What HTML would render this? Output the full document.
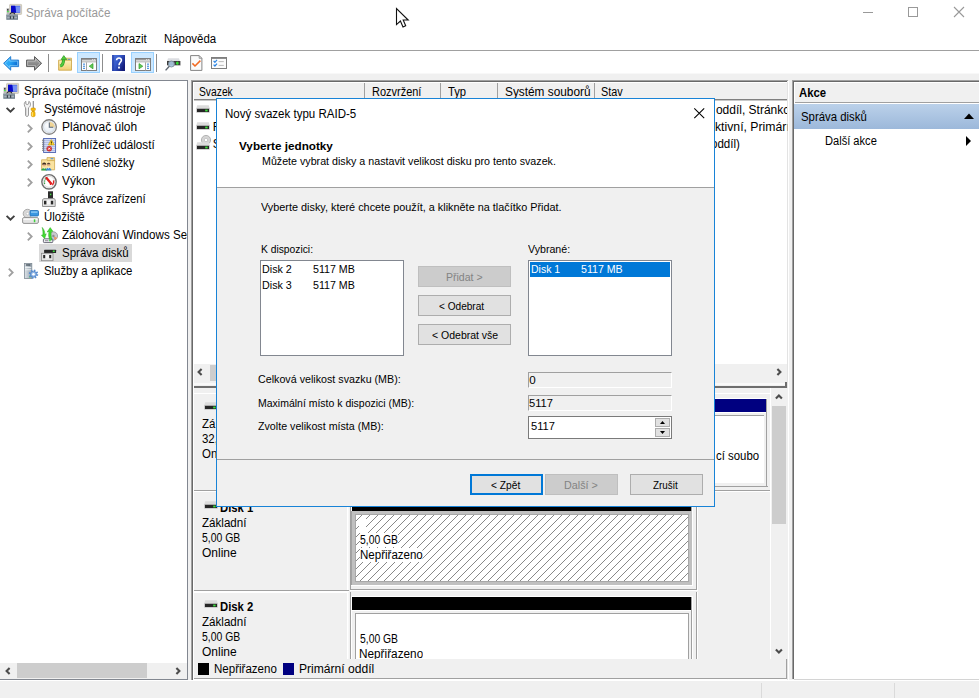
<!DOCTYPE html>
<html lang="cs">
<head>
<meta charset="utf-8">
<title>Správa počítače</title>
<style>
*{box-sizing:border-box;margin:0;padding:0}
html,body{width:979px;height:698px;overflow:hidden;background:#fff}
body{font-family:"Liberation Sans",sans-serif;font-size:12px;color:#000;position:relative}
.abs{position:absolute}
.t{position:absolute;white-space:nowrap;line-height:14px;height:14px;transform-origin:0 0}
/* title bar */
#titlebar{left:0;top:0;width:979px;height:27px;background:#fff}
#title{left:27px;top:6px;color:#999;font-size:12px}
/* menu */
#menubar{left:0;top:27px;width:979px;height:23px;background:#fff}
#menuline{left:0;top:50px;width:979px;height:1px;background:#a0a0a0}
.menu{top:32px;font-size:12px}
/* toolbar */
#toolbar{left:0;top:51px;width:979px;height:22px;background:#fff}
#toolline{left:0;top:73px;width:979px;height:1px;background:#f8f8f8}
#bg{left:0;top:74px;width:979px;height:624px;background:#f0f0f0}
/* tree */
#tree{overflow:hidden;left:0;top:80px;width:188px;height:599px;background:#fff;border-top:1px solid #828790;border-right:1px solid #828790}
.tr{font-size:12px}
/* middle */
#mid{left:191px;top:80px;width:596px;height:600px;background:#fff;border-top:2px solid #696969;border-left:2px solid #696969}
/* right */
#right{left:792px;top:80px;width:187px;height:599px;background:#fff;border-left:2px solid #696969;border-top:2px solid #696969}
/* status */
#status{left:0;top:680px;width:979px;height:18px;background:#f0f0f0}

/* volume list */
#vhead{left:194px;top:83px;width:593px;height:18px;background:#f0f0f0;border-bottom:1px solid #c8c8c8}
.vh{top:85px;font-size:12px}
.vsep{top:83px;width:1px;height:16px;background:#a0a0a0}
.vsep2{top:82px;width:1px;height:17px;background:#fff}
.vrow{font-size:12px}
#hscroll{left:194px;top:364px;width:593px;height:18px;background:#f0f0f0}
#hthumb{left:210px;top:365px;width:480px;height:16px;background:#cdcdcd}
#split1{left:194px;top:382px;width:593px;height:6px;background:#f0f0f0}
#lower{left:194px;top:388px;width:577px;height:271px;background:#f0f0f0}
#vscroll{left:771px;top:388px;width:17px;height:271px;background:#f0f0f0}
#vthumb{left:772px;top:406px;width:14px;height:118px;background:#cdcdcd}
#legend{left:194px;top:659px;width:593px;height:20px;background:#f0f0f0;border-right:1px solid #a0a0a0;border-bottom:1px solid #a0a0a0}
.dl{font-size:12px}
.hatch{background:#fff repeating-linear-gradient(135deg,#fff 0,#fff 3.95px,#8a8a8a 3.95px,#8a8a8a 4.95px,#fff 4.95px,#fff 5.66px)}
/* actions */
#ahead{left:795px;top:83px;width:184px;height:20px;background:#f0f0f0;border-bottom:1px solid #a0a0a0}
#asel{left:794px;top:104px;width:185px;height:25px;background:linear-gradient(#bbd1ea,#9cb8da)}

/* dialog */
#dlg{left:216px;top:98px;width:499px;height:409px;background:#f0f0f0;border:1px solid #1883d7}
#dlghead{left:217px;top:99px;width:497px;height:88px;background:#fff}
.d{font-size:11.6px}
.btn{position:absolute;height:21px;background:#e1e1e1;border:1px solid #adadad;font-size:11px;text-align:center;line-height:19px;white-space:nowrap}
.btn.dis{background:#cccccc;border-color:#bfbfbf;color:#838383}
.lb{position:absolute;background:#fff;border:1px solid #828790}
.sunk{position:absolute;height:16px;background:#f0f0f0;border-top:1px solid #a0a0a0;border-left:1px solid #a0a0a0;border-bottom:1px solid #fff;border-right:1px solid #fff}

.tbsel{position:absolute;top:52px;width:23px;height:21px;background:#cce8ff;border:1px solid #99d1ff}
.tbsep{position:absolute;top:54px;width:1px;height:18px;background:#8d8d8d}
svg{position:absolute;overflow:visible}
</style>
</head>
<body>
<div class="abs" id="titlebar"></div>
<div class="t" id="title" style="transform:scaleX(0.9731);left:26.0px">Správa počítače</div>

<!-- TITLE ICON / CONTROLS / CURSOR -->
<svg style="left:6px;top:4px" width="16" height="16" viewBox="0 0 16 16"><rect x="3.6" y="0.4" width="12" height="10" rx="0.6" fill="#dcd8c8" stroke="#b8b4a4" stroke-width="0.6"/><rect x="5" y="1.8" width="9.2" height="7" fill="#3a5ae8"/><path d="M5 1.8 H9 L10.2 8.8 H5 Z" fill="#0808c8"/><rect x="10" y="2.4" width="4" height="6" fill="#8fa8f8" opacity="0.7"/><rect x="0.6" y="4.2" width="2.6" height="6" fill="#b8b8b8"/><rect x="1.2" y="5" width="1.2" height="1.6" fill="#2a2a2a"/><rect x="1" y="7" width="1.8" height="1.2" fill="#4be34b"/><path d="M3.6 10.6 C4.4 8.2 8.4 8.2 9 10.6" fill="none" stroke="#222" stroke-width="1.1"/><rect x="0.3" y="10.6" width="11.7" height="5.2" fill="#71808c"/><rect x="0.3" y="10.6" width="11.7" height="1.2" fill="#8d9aa4"/><rect x="1.2" y="12.6" width="9.8" height="1.8" fill="#a8b2ba"/><rect x="3.8" y="12.2" width="1.2" height="2.6" fill="#39434b"/><rect x="7" y="12.2" width="1.2" height="2.6" fill="#39434b"/></svg>
<div class="abs" style="left:863px;top:12px;width:10px;height:1px;background:#999"></div>
<div class="abs" style="left:908px;top:7px;width:10px;height:10px;border:1px solid #999"></div>
<svg style="left:954px;top:7px" width="10" height="10" viewBox="0 0 10 10"><path d="M0 0 L10 10 M10 0 L0 10" stroke="#999" stroke-width="1.1" fill="none"/></svg>
<div class="abs" id="menubar"></div>
<div id="x0" class="t menu" style="transform:scaleX(0.9587);left:8.75px">Soubor</div>
<div id="x1" class="t menu" style="transform:scaleX(0.9591);left:62.25px">Akce</div>
<div id="x2" class="t menu" style="transform:scaleX(0.9611);left:104.5px">Zobrazit</div>
<div id="x3" class="t menu" style="transform:scaleX(0.9521);left:163.75px">Nápověda</div>
<div class="abs" id="menuline"></div>
<div class="abs" id="toolbar"></div>
<div class="abs" id="toolline"></div>
<div class="abs" id="bg"></div>


<!-- TOOLBAR ICONS -->
<svg style="left:3px;top:56px" width="16" height="15" viewBox="0 0 16 15"><defs><linearGradient id="gb" x1="0" y1="0.2" x2="1" y2="0.6"><stop offset="0" stop-color="#39b4fa"/><stop offset="0.45" stop-color="#27a6f6"/><stop offset="1" stop-color="#0560cc"/></linearGradient></defs><path d="M7.7 0.6 L0.6 7.3 L7.7 14.2 L7.7 10.6 L15.6 10.6 L15.6 4.1 L7.7 4.1 Z" fill="url(#gb)" stroke="#2a80d2" stroke-width="1"/><path d="M6.7 2.9 L2.1 7.3 L6.7 11.8 L6.7 9.6 L14.6 9.6 L14.6 5.1 L6.7 5.1 Z" fill="none" stroke="#8fd6ff" stroke-opacity="0.75" stroke-width="0.9"/></svg>
<svg style="left:26px;top:56px" width="16" height="15" viewBox="0 0 16 15"><defs><linearGradient id="gg" x1="0" y1="0" x2="0" y2="1"><stop offset="0" stop-color="#b5b5b5"/><stop offset="0.5" stop-color="#8c8c8c"/><stop offset="1" stop-color="#6e6e6e"/></linearGradient></defs><path d="M8.5 0.6 L15.6 7.3 L8.5 14.2 L8.5 10.6 L0.6 10.6 L0.6 4.1 L8.5 4.1 Z" fill="url(#gg)" stroke="#5a5a5a" stroke-width="1"/><path d="M9.5 2.9 L14.1 7.3 L9.5 11.8 L9.5 9.6 L1.6 9.6 L1.6 5.1 L9.5 5.1 Z" fill="none" stroke="#c4c4c4" stroke-opacity="0.8" stroke-width="0.9"/></svg>
<div class="tbsep" style="left:48px"></div>
<svg style="left:58px;top:55px" width="15" height="16" viewBox="0 0 15 16"><defs><linearGradient id="gf" x1="0" y1="0" x2="0" y2="1"><stop offset="0" stop-color="#fdf0bc"/><stop offset="1" stop-color="#f0cf72"/></linearGradient></defs><path d="M7.5 3.2 L13.5 3.2 L13.5 6 L7.5 6 Z" fill="#f3dc94" stroke="#cfa94e" stroke-width="0.8"/><rect x="9.8" y="3.9" width="2.6" height="1.1" fill="#4a90e0"/><path d="M0.6 5.2 L13.5 5.2 L13.5 15.2 L0.6 15.2 Z" fill="url(#gf)" stroke="#cfa94e" stroke-width="0.9"/><path d="M2.2 11.2 C4.6 10.2 5.6 7.6 5.6 4.2" fill="none" stroke="#2f9a24" stroke-width="3"/><path d="M2.2 11.2 C4.6 10.2 5.6 7.6 5.6 4.2" fill="none" stroke="#52cc3e" stroke-width="1.8"/><path d="M3 4.6 L5.8 0.6 L8.8 4.6 Z" fill="#52cc3e" stroke="#2f9a24" stroke-width="0.7"/></svg>
<div class="tbsel" style="left:77px"></div>
<svg style="left:81px;top:58px" width="16" height="13" viewBox="0 0 16 13"><rect x="0.5" y="0.5" width="15" height="12" fill="#fdfdfd" stroke="#7e7e7e"/><rect x="1" y="1" width="14" height="1.4" fill="#9a9a9a"/><rect x="11.2" y="1" width="1" height="1.2" fill="#e8e8e8"/><rect x="13.2" y="1" width="1" height="1.2" fill="#e8e8e8"/><rect x="1" y="3.4" width="14" height="0.9" fill="#a4a4a4"/><rect x="5.0" y="4.3" width="1" height="8.2" fill="#a4a4a4"/><rect x="2" y="5.6" width="2" height="1.1" fill="#3c8ae0"/><rect x="2" y="7.7" width="2" height="1.1" fill="#3c8ae0"/><rect x="2" y="9.8" width="2" height="1.1" fill="#3c8ae0"/><path d="M12 5.6 L8.2 8.2 L12 10.8 Z" fill="#62c956" stroke="#2f9e2a" stroke-width="0.7"/></svg>
<div class="tbsep" style="left:102px"></div>
<svg style="left:112px;top:55px" width="13" height="16" viewBox="0 0 13 16"><defs><linearGradient id="gh" x1="0" y1="0" x2="1" y2="0.6"><stop offset="0" stop-color="#5078e0"/><stop offset="0.5" stop-color="#3558c8"/><stop offset="1" stop-color="#141c7a"/></linearGradient></defs><rect x="0" y="0" width="13" height="16" fill="url(#gh)"/><rect x="0" y="0" width="2.2" height="16" fill="#24389c" opacity="0.55"/><path d="M4.6 5.2 C4.4 2.2 9.6 2.2 9.4 5.2 C9.3 7.2 7 7.4 7 10.2" fill="none" stroke="#fff" stroke-width="1.6"/><rect x="6.1" y="11.6" width="1.8" height="1.9" fill="#fff"/></svg>
<div class="tbsel" style="left:131px"></div>
<svg style="left:135px;top:58px" width="16" height="13" viewBox="0 0 16 13"><rect x="0.5" y="0.5" width="15" height="12" fill="#fdfdfd" stroke="#7e7e7e"/><rect x="1" y="1" width="14" height="1.4" fill="#9a9a9a"/><rect x="11.2" y="1" width="1" height="1.2" fill="#e8e8e8"/><rect x="13.2" y="1" width="1" height="1.2" fill="#e8e8e8"/><rect x="1" y="3.4" width="14" height="0.9" fill="#a4a4a4"/><rect x="10.0" y="4.3" width="1" height="8.2" fill="#a4a4a4"/><rect x="12" y="5.6" width="2" height="1.1" fill="#3c8ae0"/><rect x="12" y="7.7" width="2" height="1.1" fill="#3c8ae0"/><rect x="12" y="9.8" width="2" height="1.1" fill="#3c8ae0"/><path d="M4 5.6 L7.8 8.2 L4 10.8 Z" fill="#62c956" stroke="#2f9e2a" stroke-width="0.7"/></svg>
<div class="tbsep" style="left:156px"></div>
<svg style="left:165px;top:58px" width="16" height="13" viewBox="0 0 16 13"><path d="M3 0.2 H14 L15 3.2 H2 Z" fill="#dcdee2"/><rect x="2" y="3" width="13.4" height="4.4" fill="#3c3c3c"/><rect x="2" y="7.2" width="13.4" height="0.7" fill="#c8c8c8"/><rect x="11" y="4.1" width="2.6" height="2.2" fill="#35d935"/><rect x="11.9" y="3.6" width="0.9" height="3.2" fill="#35d935"/><circle cx="6.4" cy="6" r="3" fill="#a9c6e0" fill-opacity="0.92" stroke="#7d8c9a" stroke-width="0.9"/><path d="M4.3 8.3 L0.6 12.4" stroke="#5e6670" stroke-width="1.4"/></svg>
<svg style="left:190px;top:55px" width="13" height="16" viewBox="0 0 13 16"><path d="M0.6 0.6 L9.2 0.6 L11.9 3.3 L11.9 15.4 L0.6 15.4 Z" fill="#fbfbfb" stroke="#848484" stroke-width="1"/><path d="M9.2 0.6 L9.2 3.3 L11.9 3.3" fill="none" stroke="#848484" stroke-width="0.8"/><path d="M2.4 8.4 L5 11 L10.4 5.6" fill="none" stroke="#f26a21" stroke-width="1.5"/></svg>
<svg style="left:211px;top:57px" width="16" height="12" viewBox="0 0 16 12"><rect x="0.5" y="0.5" width="15" height="11" fill="#fcfcfc" stroke="#7e7e7e"/><rect x="1" y="1" width="14" height="1" fill="#8e8e8e"/><path d="M2.6 3.9 L3.9 5.3 L6 2.9" fill="none" stroke="#2e86e4" stroke-width="1.25"/><path d="M2.6 7.6 L3.9 9 L6 6.6" fill="none" stroke="#2e86e4" stroke-width="1.25"/><rect x="7.6" y="4.2" width="5.2" height="0.9" fill="#b4b4b4"/><rect x="7.6" y="7.9" width="5.2" height="0.9" fill="#b4b4b4"/></svg>

<!-- TREE -->
<div class="abs" id="tree"></div>
<!-- TREE ICONS -->
<div class="abs" style="left:39px;top:244px;width:93px;height:18px;background:#d9d9d9"></div>
<svg style="left:3px;top:83px" width="16" height="16" viewBox="0 0 16 16"><rect x="3.6" y="0.4" width="12" height="10" rx="0.6" fill="#dcd8c8" stroke="#b8b4a4" stroke-width="0.6"/><rect x="5" y="1.8" width="9.2" height="7" fill="#3a5ae8"/><path d="M5 1.8 H9 L10.2 8.8 H5 Z" fill="#0808c8"/><rect x="10" y="2.4" width="4" height="6" fill="#8fa8f8" opacity="0.7"/><rect x="0.6" y="4.2" width="2.6" height="6" fill="#b8b8b8"/><rect x="1.2" y="5" width="1.2" height="1.6" fill="#2a2a2a"/><rect x="1" y="7" width="1.8" height="1.2" fill="#4be34b"/><path d="M3.6 10.6 C4.4 8.2 8.4 8.2 9 10.6" fill="none" stroke="#222" stroke-width="1.1"/><rect x="0.3" y="10.6" width="11.7" height="5.2" fill="#71808c"/><rect x="0.3" y="10.6" width="11.7" height="1.2" fill="#8d9aa4"/><rect x="1.2" y="12.6" width="9.8" height="1.8" fill="#a8b2ba"/><rect x="3.8" y="12.2" width="1.2" height="2.6" fill="#39434b"/><rect x="7" y="12.2" width="1.2" height="2.6" fill="#39434b"/></svg>
<svg style="left:6px;top:107px" width="9" height="6" viewBox="0 0 9 6"><path d="M0.6 0.8 L4.5 4.7 L8.4 0.8" fill="none" stroke="#404040" stroke-width="1.9"/></svg>
<svg style="left:24px;top:101px" width="12" height="16" viewBox="0 0 12 16"><path d="M1.5 14.2 C1.5 15.8 4.5 15.8 4.5 14.2 L4.5 6.8 C5.6 6.2 6.6 5 6.5 3.2 C6.4 1.6 5.6 0.7 4.9 0.3 L4.6 2.9 L3.2 3.6 L1.8 2.9 L1.9 0.3 C0.9 0.8 0.2 1.9 0.3 3.4 C0.4 5 1 6.1 1.5 6.8 Z" fill="#f4f4f4" stroke="#8a8a8a" stroke-width="0.85"/><path d="M2.6 7.4 L2.6 14.2" stroke="#cfcfcf" stroke-width="0.8"/><rect x="8.7" y="0" width="1.2" height="7.4" fill="#8e8e8e"/><rect x="7" y="7" width="4.4" height="2.6" rx="0.8" fill="#f7bc08" stroke="#c98a00" stroke-width="0.5"/><rect x="8" y="9.4" width="2.5" height="1.6" fill="#d89a00"/><rect x="7.3" y="10.6" width="3.8" height="5.1" rx="1.4" fill="#f7bc08" stroke="#c98a00" stroke-width="0.5"/><rect x="8.1" y="11.2" width="0.9" height="3.8" fill="#fde07a"/></svg>
<svg style="left:27px;top:124px" width="6" height="9" viewBox="0 0 6 9"><path d="M0.8 0.6 L4.7 4.5 L0.8 8.4" fill="none" stroke="#a0a0a0" stroke-width="1.8"/></svg>
<svg style="left:41px;top:119px" width="16" height="16" viewBox="0 0 16 16"><defs><radialGradient id="gc" cx="0.4" cy="0.35" r="0.7"><stop offset="0" stop-color="#ffffff"/><stop offset="1" stop-color="#dfe8f2"/></radialGradient></defs><circle cx="8.1" cy="8" r="7.25" fill="#f2f2f2" stroke="#808080" stroke-width="1.3"/><circle cx="8.1" cy="8" r="5.6" fill="url(#gc)" stroke="#c4d0dc" stroke-width="0.6"/><path d="M8.3 8.3 L8.3 2.7 A5.6 5.6 0 0 1 13.8 8.3 Z" fill="#f1d596"/><path d="M8.3 3.4 L8.3 8.3 L12.2 8.3" fill="none" stroke="#55657a" stroke-width="1.05"/></svg>
<svg style="left:27px;top:142px" width="6" height="9" viewBox="0 0 6 9"><path d="M0.8 0.6 L4.7 4.5 L0.8 8.4" fill="none" stroke="#a0a0a0" stroke-width="1.8"/></svg>
<svg style="left:41px;top:138px" width="15" height="15" viewBox="0 0 15 15"><rect x="2.6" y="0.5" width="12" height="14" fill="#d3dbf3" stroke="#4c62b2" stroke-width="0.9"/><path d="M3.2 2.5 H14 M3.2 4.5 H14 M3.2 6.5 H14 M3.2 8.5 H14 M3.2 10.5 H14 M3.2 12.5 H14" stroke="#a9b6e4" stroke-width="0.8"/><path d="M1 2.2 H3.4 M1 4.2 H3.4 M1 6.2 H3.4 M1 8.2 H3.4 M1 10.2 H3.4 M1 12.2 H3.4" stroke="#7c7c7c" stroke-width="1.1"/><path d="M10.3 1.6 L13.3 6.9 L7.3 6.9 Z" fill="#ffd632" stroke="#c79a00" stroke-width="0.6"/><rect x="9.9" y="3.4" width="0.9" height="1.9" fill="#2a2000"/><rect x="9.9" y="5.7" width="0.9" height="0.7" fill="#2a2000"/><circle cx="8.2" cy="10.7" r="2.5" fill="#e23434" stroke="#a81c1c" stroke-width="0.5"/><path d="M7.2 9.7 L9.2 11.7 M9.2 9.7 L7.2 11.7" stroke="#fff" stroke-width="0.9"/></svg>
<svg style="left:27px;top:160px" width="6" height="9" viewBox="0 0 6 9"><path d="M0.8 0.6 L4.7 4.5 L0.8 8.4" fill="none" stroke="#a0a0a0" stroke-width="1.8"/></svg>
<svg style="left:41px;top:157px" width="15" height="14" viewBox="0 0 15 14"><path d="M6 0.6 L13.6 0.6 L13.6 4 L6 4 Z" fill="#f3dc94" stroke="#cfa94e" stroke-width="0.8"/><rect x="9.6" y="1.2" width="2.8" height="1" fill="#4a90e0"/><path d="M0.6 2.8 L5.6 2.8 L6.6 3.6 L13.6 3.6 L13.6 12.8 L0.6 12.8 Z" fill="#fae3a0" stroke="#cfa94e" stroke-width="0.8"/><circle cx="3.2" cy="7.6" r="1.9" fill="#e8b68a"/><path d="M1.2 7.7 A2 2.1 0 0 1 5.2 7.7 C4.4 6.8 2 6.8 1.2 7.7 Z" fill="#3c2e22"/><path d="M1.3 7.5 A1.95 2 0 0 1 5.1 7.5 Z" fill="#3c2e22" opacity="0.75"/><path d="M0.2 13.6 C0.2 10 6 10 6 13.6 Z" fill="#2fa44a"/><path d="M2.4 10.8 L3.2 12.2 L4 10.8 Z" fill="#fff"/><circle cx="7.6" cy="7.4" r="1.9" fill="#e8b68a"/><path d="M5.7 7.3 A1.95 2 0 0 1 9.5 7.3 Z" fill="#3c2e22" opacity="0.85"/><path d="M4.8 13.4 C4.8 9.8 10.4 9.8 10.4 13.4 Z" fill="#3a8ad6"/><path d="M6.8 10.6 L7.6 12 L8.4 10.6 Z" fill="#fff"/></svg>
<svg style="left:27px;top:178px" width="6" height="9" viewBox="0 0 6 9"><path d="M0.8 0.6 L4.7 4.5 L0.8 8.4" fill="none" stroke="#a0a0a0" stroke-width="1.8"/></svg>
<svg style="left:41px;top:173.5px" width="16" height="16" viewBox="0 0 16 16"><circle cx="8" cy="7.8" r="7.2" fill="#f6f6f6" stroke="#6e6e6e" stroke-width="1.4"/><circle cx="8" cy="7.8" r="5.5" fill="#fff" stroke="#c8c8c8" stroke-width="0.6"/><path d="M3.6 10 C3.2 7 4.2 5 5.4 3.8" fill="none" stroke="#3a9a44" stroke-width="1.2" stroke-dasharray="1.4 0.8"/><path d="M12.6 6.4 C13 8.4 12.4 10 11.4 11" fill="none" stroke="#e02424" stroke-width="1.4"/><path d="M4.4 3 L6.2 3 L11.6 9.4 L10 11 L9 11 L8.6 9.6 L4.8 5 Z" fill="#e02020"/></svg>
<svg style="left:42px;top:191px" width="14" height="16" viewBox="0 0 14 16"><rect x="6" y="0.3" width="5" height="7.8" fill="#2c2c2c"/><rect x="7.9" y="2.7" width="1.4" height="1.5" fill="#45e045"/><path d="M0.5 15.5 L0.5 8.6 L2 7.6 L12 7.6 L13.2 8.6 L13.2 15.5 Z" fill="#e2e2e2" stroke="#8a8a8a" stroke-width="0.9"/><rect x="4.4" y="9.4" width="4.4" height="4" fill="#f6f6f6"/><rect x="2" y="9.8" width="2.4" height="3.6" fill="#2a2a2a"/><rect x="8.8" y="9.8" width="2.4" height="3.6" fill="#2a2a2a"/></svg>
<svg style="left:6px;top:215px" width="9" height="6" viewBox="0 0 9 6"><path d="M0.6 0.8 L4.5 4.7 L8.4 0.8" fill="none" stroke="#404040" stroke-width="1.9"/></svg>
<svg style="left:22px;top:209px" width="17" height="15" viewBox="0 0 17 15"><circle cx="5.5" cy="4.6" r="4.3" fill="#d9d9d9" stroke="#9a9a9a" stroke-width="0.8"/><circle cx="5.5" cy="4.6" r="1.3" fill="#fff" stroke="#aaa" stroke-width="0.5"/><rect x="8" y="1.5" width="8.5" height="5.5" rx="1" fill="#3b97e0" stroke="#1c6cb8" stroke-width="0.8"/><rect x="9" y="2.4" width="6.5" height="1.4" fill="#8fcaf6"/><rect x="0.6" y="8.6" width="15.8" height="5.8" rx="1.4" fill="#e4e4e4" stroke="#8a8a8a" stroke-width="0.9"/><rect x="1.4" y="9.4" width="14.2" height="1.6" fill="#f8f8f8"/><rect x="11.8" y="10.3" width="1.5" height="2.9" fill="#3ed03e"/></svg>
<svg style="left:27px;top:232px" width="6" height="9" viewBox="0 0 6 9"><path d="M0.8 0.6 L4.7 4.5 L0.8 8.4" fill="none" stroke="#a0a0a0" stroke-width="1.8"/></svg>
<svg style="left:41px;top:227px" width="16" height="16" viewBox="0 0 16 16"><circle cx="12.4" cy="9" r="4.2" fill="#c9c9cd" stroke="#8c8c90" stroke-width="0.7"/><path d="M12.4 9 L16.2 11 A4.2 4.2 0 0 1 13.4 13.1 Z" fill="#f0905a" opacity="0.85"/><path d="M12.4 9 L13.4 13.1 A4.2 4.2 0 0 1 10.6 12.8 Z" fill="#a9c4f0" opacity="0.8"/><circle cx="12.4" cy="9" r="1.2" fill="#8e8e92"/><rect x="2.4" y="11.8" width="9.4" height="3.8" rx="0.8" fill="#ececf0" stroke="#5c5c6c" stroke-width="0.9"/><rect x="4" y="13.2" width="3.4" height="1" fill="#8a8a96"/><rect x="8.2" y="13" width="1.4" height="1.3" fill="#35d035"/><path d="M1.2 0.4 C3.2 2.6 4 5 3.6 7.4 L5.2 6.8 L3.6 11.6 L0.4 8.2 L1.8 8 C2.2 5.6 1.8 3 1.2 0.4 Z" fill="#3fdc2f" stroke="#2aa822" stroke-width="0.5"/><path d="M9.2 0.6 L12 4.4 L10.4 4.2 C9.8 7 10 10 11 13 L8.6 12.6 C7.6 9.6 7.4 7 8 4.4 L6.2 5 Z" fill="#3fdc2f" stroke="#2aa822" stroke-width="0.5"/></svg>
<svg style="left:41px;top:246px" width="16" height="15" viewBox="0 0 16 15"><path d="M3.6 0.2 H14.6 L15.4 3.8 H2.8 Z" fill="#d9dbde"/><rect x="3.1" y="3.7" width="12" height="3.3" rx="0.5" fill="#262626"/><rect x="11.8" y="4.5" width="1.9" height="1.6" fill="#42e042"/><rect x="0.4" y="7.3" width="11.6" height="7.4" fill="#e4e4e4" stroke="#8a8a8a" stroke-width="0.8"/><rect x="4.2" y="8.8" width="4" height="3.6" fill="#f6f6f6"/><rect x="2.2" y="9" width="2" height="3.2" fill="#262626"/><rect x="8.2" y="9" width="2" height="3.2" fill="#262626"/></svg>
<svg style="left:8px;top:268px" width="6" height="9" viewBox="0 0 6 9"><path d="M0.8 0.6 L4.7 4.5 L0.8 8.4" fill="none" stroke="#a0a0a0" stroke-width="1.8"/></svg>
<svg style="left:24px;top:263px" width="15" height="16" viewBox="0 0 15 16"><defs><linearGradient id="gt" x1="0" y1="0" x2="1" y2="0"><stop offset="0" stop-color="#dfe5ea"/><stop offset="1" stop-color="#97a5b1"/></linearGradient></defs><rect x="0.4" y="0.4" width="7.4" height="15" fill="url(#gt)" stroke="#7f8a94" stroke-width="0.8"/><rect x="1.8" y="1.5" width="4.6" height="1" fill="#1e2a34"/><rect x="1" y="4" width="6.2" height="0.8" fill="#f2f5f7"/><rect x="1" y="6.4" width="6.2" height="0.8" fill="#f2f5f7"/><rect x="5" y="13.2" width="1.6" height="1.2" fill="#46d046"/><circle cx="9.5" cy="11.2" r="3.7" fill="none" stroke="#5b8fd0" stroke-width="2" stroke-dasharray="1.45 1.45"/><circle cx="9.5" cy="11.2" r="3" fill="#8db4e4" stroke="#4a80c6" stroke-width="0.8"/><circle cx="9.5" cy="11.2" r="1.25" fill="#fff"/></svg>
<div id="x4" class="t tr" style="transform:scaleX(0.9746);left:24.25px;top:84px">Správa počítače (místní)</div>
<div id="x5" class="t tr" style="transform:scaleX(0.963);left:43.5px;top:102px">Systémové nástroje</div>
<div id="x6" class="t tr" style="transform:scaleX(0.9972);left:62.25px;top:120px">Plánovač úloh</div>
<div id="x7" class="t tr" style="transform:scaleX(0.9714);left:62.25px;top:138px">Prohlížeč událostí</div>
<div id="x8" class="t tr" style="transform:scaleX(0.9344);left:62.25px;top:156px">Sdílené složky</div>
<div id="x9" class="t tr" style="transform:scaleX(0.9946);left:62.25px;top:174px">Výkon</div>
<div id="x10" class="t tr" style="transform:scaleX(0.9283);left:62.25px;top:192px">Správce zařízení</div>
<div id="x11" class="t tr" style="transform:scaleX(0.9534);left:43.5px;top:210px">Úložiště</div>
<div id="x12" class="t tr" style="transform:scaleX(0.967);left:62.25px;top:228px;width:129px;overflow:hidden">Zálohování Windows Se</div>
<div id="x13" class="t tr" style="transform:scaleX(0.9608);left:62.25px;top:246px">Správa disků</div>
<div id="x14" class="t tr" style="transform:scaleX(0.9465);left:43.5px;top:264px">Služby a aplikace</div>

<!-- tree scrollbar -->
<div class="abs" style="left:0;top:663px;width:187px;height:16px;background:#f0f0f0"></div>
<div class="abs" style="left:17px;top:663px;width:130px;height:15px;background:#cdcdcd"></div>
<svg style="left:5px;top:667px" width="6" height="8" viewBox="0 0 6 8"><path d="M4.6 0.9 L1.6 3.9 L4.6 6.9" fill="none" stroke="#4d4d4d" stroke-width="2.1"/></svg>
<svg style="left:175.3px;top:667px" width="6" height="8" viewBox="0 0 6 8"><path d="M1.4 0.9 L4.4 3.9 L1.4 6.9" fill="none" stroke="#4d4d4d" stroke-width="2.1"/></svg>
<div class="abs" style="left:0;top:679px;width:188px;height:1px;background:#828790"></div>

<!-- MIDDLE -->
<div class="abs" id="mid"></div>
<div class="abs" style="left:191px;top:80px;width:1px;height:600px;background:#a0a0a0"></div>
<div class="abs" style="left:191px;top:80px;width:597px;height:1px;background:#a0a0a0"></div>
<div class="abs" style="left:787px;top:82px;width:1px;height:598px;background:#e3e3e3"></div>
<div class="abs" style="left:788px;top:81px;width:1px;height:599px;background:#fff"></div>


<div class="abs" id="vhead"></div>
<div class="abs" style="left:194px;top:99px;width:593px;height:1px;background:#808080"></div>
<div id="x15" class="t vh" style="transform:scaleX(0.8575);left:199.25px">Svazek</div>
<div class="abs vsep" style="left:364px"></div>
<div id="x16" class="t vh" style="transform:scaleX(0.9144);left:371.5px">Rozvržení</div>
<div class="abs vsep" style="left:440px"></div>
<div id="x17" class="t vh" style="transform:scaleX(0.9355);left:448.25px">Typ</div>
<div class="abs vsep" style="left:497px"></div>
<div id="x18" class="t vh" style="transform:scaleX(0.9868);left:504.75px">Systém souborů</div>
<div class="abs vsep" style="left:594px"></div>
<div id="x19" class="t vh" style="transform:scaleX(0.9037);left:601.0px">Stav</div>
<div id="x20" class="t vrow" style="left:212.75px;top:120px">F</div>
<div id="x21" class="t vrow" style="left:212.75px;top:137px">S</div>
<div id="x22" class="t vrow" style="transform:scaleX(1.0);left:715.9px;top:103px;width:71.1px;overflow:hidden">oddíl, Stránkc</div>
<div id="x23" class="t vrow" style="transform:scaleX(1.02);left:714.5px;top:120px;width:71.1px;overflow:hidden">ktivní, Primárr</div>
<div id="x24" class="t vrow" style="left:711.3px;top:137px;transform:scaleX(0.9635)">oddíl)</div>
<div class="abs" id="hscroll"></div>
<div class="abs" id="hthumb"></div>
<div class="abs" id="split1"></div>
<div class="abs" style="left:194px;top:383px;width:591px;height:2px;background:#f9f9f9"></div>
<div class="abs" style="left:194px;top:386px;width:593px;height:1.5px;background:#6e6e6e"></div>
<div class="abs" style="left:785px;top:382px;width:1.6px;height:5.5px;background:#6e6e6e"></div>
<div class="abs" id="lower"></div>
<div class="abs" id="vscroll"></div>
<div class="abs" id="vthumb"></div>
<div class="abs" style="left:770px;top:388px;width:1px;height:271px;background:#fff"></div>
<!-- disk0 -->
<div class="abs" style="left:194px;top:393px;width:576px;height:1px;background:#fff"></div>
<div id="x25" class="t dl" style="transform:scaleX(0.955);left:201.75px;top:417px">Zá</div>
<div id="x26" class="t dl" style="transform:scaleX(0.955);left:201.75px;top:432px">32,</div>
<div id="x27" class="t dl" style="transform:scaleX(0.955);left:201.75px;top:447px">On</div>
<div class="abs" style="left:640px;top:398px;width:127px;height:1px;background:#fff"></div>
<div class="abs" style="left:640px;top:399px;width:126px;height:13px;background:#000080"></div>
<div class="abs" style="left:766px;top:399px;width:1px;height:88px;background:#a0a0a0"></div>
<div class="abs" style="left:640px;top:412px;width:126px;height:1px;background:#fff"></div>
<div class="abs" style="left:640px;top:415px;width:124px;height:1px;background:#a0a0a0"></div>
<div class="abs" style="left:640px;top:416px;width:124px;height:67px;background:#fff"></div>
<div class="abs" style="left:640px;top:486px;width:128px;height:1px;background:#a0a0a0"></div>
<div id="x28" class="t dl" style="transform:scaleX(0.9499);left:716.0px;top:449px">cí soubo</div>
<div class="abs" style="left:194px;top:490px;width:576px;height:1px;background:#a0a0a0"></div>
<div class="abs" style="left:194px;top:491px;width:576px;height:1px;background:#fff"></div>
<!-- disk1 -->
<div id="x29" class="t dl" style="transform:scaleX(0.9417);left:219.75px;top:501px;font-weight:bold">Disk 1</div>
<div id="x30" class="t dl" style="transform:scaleX(0.9659);left:201.75px;top:516px">Základní</div>
<div id="x31" class="t dl" style="transform:scaleX(0.8677);left:201.75px;top:531px">5,00 GB</div>
<div id="x32" class="t dl" style="transform:scaleX(0.9996);left:201.75px;top:546px">Online</div>
<div class="abs" style="left:347px;top:492px;width:1px;height:98px;background:#fff"></div><div class="abs" style="left:348px;top:492px;width:1px;height:98px;background:#f7f7f7"></div>
<div class="abs" style="left:194px;top:590px;width:155px;height:1px;background:#a0a0a0"></div>
<div class="abs" style="left:194px;top:591px;width:155px;height:1px;background:#fff"></div>
<div class="abs" style="left:350px;top:492px;width:1px;height:98px;background:#a0a0a0"></div>
<div class="abs" style="left:350px;top:589px;width:347px;height:1px;background:#a0a0a0"></div>
<div class="abs" style="left:350px;top:590px;width:348px;height:1px;background:#fff"></div>
<div class="abs" style="left:696px;top:492px;width:1px;height:98px;background:#a0a0a0"></div>
<div class="abs" style="left:697px;top:492px;width:1px;height:98px;background:#fff"></div>
<div class="abs" style="left:351px;top:497px;width:342px;height:1px;background:#fff"></div>
<div class="abs" style="left:351px;top:497px;width:1px;height:89px;background:#fff"></div>
<div class="abs" style="left:692px;top:497px;width:1px;height:89px;background:#fff"></div>
<div class="abs" style="left:351px;top:585px;width:342px;height:1px;background:#fff"></div>
<div class="abs" style="left:352px;top:498px;width:339px;height:13px;background:#000"></div>
<div class="abs" style="left:691px;top:498px;width:1px;height:13px;background:#a0a0a0"></div>
<div class="abs" style="left:351px;top:511px;width:341px;height:74px;background:#c0c0c0"></div>
<div class="abs" style="left:351px;top:511px;width:1px;height:74px;background:#a2a2a2"></div>
<div class="abs" style="left:355px;top:514px;width:334px;height:68px;background:#a8a8a8"></div>
<svg style="left:356px;top:515px" width="332" height="66" viewBox="0 0 332 66"><defs><pattern id="hp" x="0" y="0" width="8" height="8" patternUnits="userSpaceOnUse"><rect width="8" height="8" fill="#fff"/><path d="M5 0h1v1h-1zM4 1h1v1h-1zM3 2h1v1h-1zM2 3h1v1h-1zM1 4h1v1h-1zM0 5h1v1h-1zM7 6h1v1h-1zM6 7h1v1h-1z" fill="#888"/></pattern></defs><rect width="332" height="66" fill="url(#hp)" shape-rendering="crispEdges"/></svg>
<div class="abs" style="left:359px;top:519px;width:7px;height:14px;background:#fff"></div>
<div id="x33" class="t dl" style="transform:scaleX(0.8632);left:359.75px;top:533px;background:#fff">5,00 GB</div>
<div id="x34" class="t dl" style="transform:scaleX(0.9605);left:359.75px;top:548px;background:#fff">Nepřiřazeno</div>
<!-- disk2 -->
<div class="abs" style="left:194px;top:592px;width:155px;height:1px;background:#fff"></div>
<div id="x35" class="t dl" style="transform:scaleX(0.9417);left:219.75px;top:600px;font-weight:bold">Disk 2</div>
<div id="x36" class="t dl" style="transform:scaleX(0.9659);left:201.75px;top:615px">Základní</div>
<div id="x37" class="t dl" style="transform:scaleX(0.8677);left:201.75px;top:630px">5,00 GB</div>
<div id="x38" class="t dl" style="transform:scaleX(0.9996);left:201.75px;top:645px">Online</div>
<div class="abs" style="left:347px;top:592px;width:1px;height:67px;background:#fff"></div><div class="abs" style="left:348px;top:592px;width:1px;height:67px;background:#f7f7f7"></div>
<div class="abs" style="left:350px;top:592px;width:1px;height:67px;background:#a0a0a0"></div>
<div class="abs" style="left:696px;top:592px;width:1px;height:67px;background:#a0a0a0"></div>
<div class="abs" style="left:697px;top:592px;width:1px;height:67px;background:#fff"></div>
<div class="abs" style="left:351px;top:596px;width:342px;height:1px;background:#fff"></div>
<div class="abs" style="left:351px;top:596px;width:1px;height:63px;background:#fff"></div>
<div class="abs" style="left:692px;top:596px;width:1px;height:63px;background:#fff"></div>
<div class="abs" style="left:352px;top:597px;width:339px;height:13px;background:#000"></div>
<div class="abs" style="left:691px;top:597px;width:1px;height:62px;background:#a0a0a0"></div>
<div class="abs" style="left:352px;top:610px;width:339px;height:1px;background:#fff"></div>
<div class="abs" style="left:355px;top:613px;width:334px;height:46px;background:#a0a0a0"></div>
<div class="abs" style="left:356px;top:614px;width:332px;height:45px;background:#fff"></div>
<div id="x39" class="t dl" style="transform:scaleX(0.8632);left:359.75px;top:632px">5,00 GB</div>
<div id="x40" class="t dl" style="transform:scaleX(0.9818);left:358.75px;top:647px;height:13px;overflow:hidden">Nepřiřazeno</div>
<!-- vol icons -->
<svg style="left:196px;top:105px" width="14" height="8" viewBox="0 0 14 8"><path d="M1.2 0.2 H12.8 L13.8 3.6 H0.2 Z" fill="#dcdcdc"/><rect x="0.2" y="3.4" width="13.6" height="0.6" fill="#bdbdbd"/><rect x="0.8" y="3.8" width="12.4" height="3.4" fill="#262626"/><rect x="0.2" y="7.2" width="13.6" height="0.6" fill="#d0d0d0"/><rect x="9.2" y="4.6" width="2.4" height="1.8" fill="#3de23d"/></svg>
<svg style="left:196px;top:122px" width="14" height="8" viewBox="0 0 14 8"><path d="M1.2 0.2 H12.8 L13.8 3.6 H0.2 Z" fill="#dcdcdc"/><rect x="0.2" y="3.4" width="13.6" height="0.6" fill="#bdbdbd"/><rect x="0.8" y="3.8" width="12.4" height="3.4" fill="#262626"/><rect x="0.2" y="7.2" width="13.6" height="0.6" fill="#d0d0d0"/><rect x="9.2" y="4.6" width="2.4" height="1.8" fill="#3de23d"/></svg>
<svg style="left:201px;top:135px" width="10" height="10" viewBox="0 0 10 10"><circle cx="5" cy="5" r="4.6" fill="#d4d4d4" stroke="#a4a4a4" stroke-width="0.8"/><circle cx="5" cy="5" r="1.7" fill="#fff" stroke="#b0b0b0" stroke-width="0.6"/></svg>
<svg style="left:196px;top:142px" width="14" height="8" viewBox="0 0 14 8"><path d="M1.2 0.2 H12.8 L13.8 3.6 H0.2 Z" fill="#dcdcdc"/><rect x="0.2" y="3.4" width="13.6" height="0.6" fill="#bdbdbd"/><rect x="0.8" y="3.8" width="12.4" height="3.4" fill="#262626"/><rect x="0.2" y="7.2" width="13.6" height="0.6" fill="#d0d0d0"/><rect x="9.2" y="4.6" width="2.4" height="1.8" fill="#3de23d"/></svg>
<svg style="left:197px;top:367.6px" width="6" height="8" viewBox="0 0 6 8"><path d="M4.6 0.9 L1.6 3.9 L4.6 6.9" fill="none" stroke="#4d4d4d" stroke-width="2.1"/></svg>
<svg style="left:776px;top:367.6px" width="6" height="8" viewBox="0 0 6 8"><path d="M1.4 0.9 L4.4 3.9 L1.4 6.9" fill="none" stroke="#4d4d4d" stroke-width="2.1"/></svg>
<svg style="left:774.8px;top:393.6px" width="8" height="6" viewBox="0 0 8 6"><path d="M0.9 4.6 L3.9 1.6 L6.9 4.6" fill="none" stroke="#4d4d4d" stroke-width="2.1"/></svg>
<svg style="left:774.8px;top:648.2px" width="8" height="6" viewBox="0 0 8 6"><path d="M0.9 1.4 L3.9 4.4 L6.9 1.4" fill="none" stroke="#4d4d4d" stroke-width="2.1"/></svg>
<svg style="left:204px;top:402px" width="14" height="8" viewBox="0 0 14 8"><path d="M1.2 0.2 H12.8 L13.8 3.6 H0.2 Z" fill="#dcdcdc"/><rect x="0.2" y="3.4" width="13.6" height="0.6" fill="#bdbdbd"/><rect x="0.8" y="3.8" width="12.4" height="3.4" fill="#262626"/><rect x="0.2" y="7.2" width="13.6" height="0.6" fill="#d0d0d0"/><rect x="9.2" y="4.6" width="2.4" height="1.8" fill="#3de23d"/></svg>
<svg style="left:204px;top:501px" width="14" height="8" viewBox="0 0 14 8"><path d="M1.2 0.2 H12.8 L13.8 3.6 H0.2 Z" fill="#dcdcdc"/><rect x="0.2" y="3.4" width="13.6" height="0.6" fill="#bdbdbd"/><rect x="0.8" y="3.8" width="12.4" height="3.4" fill="#262626"/><rect x="0.2" y="7.2" width="13.6" height="0.6" fill="#d0d0d0"/><rect x="9.2" y="4.6" width="2.4" height="1.8" fill="#3de23d"/></svg>
<svg style="left:204px;top:600px" width="14" height="8" viewBox="0 0 14 8"><path d="M1.2 0.2 H12.8 L13.8 3.6 H0.2 Z" fill="#dcdcdc"/><rect x="0.2" y="3.4" width="13.6" height="0.6" fill="#bdbdbd"/><rect x="0.8" y="3.8" width="12.4" height="3.4" fill="#262626"/><rect x="0.2" y="7.2" width="13.6" height="0.6" fill="#d0d0d0"/><rect x="9.2" y="4.6" width="2.4" height="1.8" fill="#3de23d"/></svg>
<div class="abs" id="legend"></div>
<div class="abs" style="left:198px;top:663px;width:11px;height:12px;background:#000"></div>
<div id="x41" class="t dl" style="transform:scaleX(0.962);left:214.25px;top:662px">Nepřiřazeno</div>
<div class="abs" style="left:283px;top:663px;width:11px;height:12px;background:#000080"></div>
<div id="x42" class="t dl" style="transform:scaleX(1.0077);left:298.5px;top:662px">Primární oddíl</div>

<!-- RIGHT -->
<div class="abs" id="right"></div>
<div class="abs" style="left:792px;top:80px;width:1px;height:599px;background:#a0a0a0"></div>
<div class="abs" style="left:792px;top:80px;width:187px;height:1px;background:#a0a0a0"></div>


<div class="abs" id="ahead"></div>
<div id="x43" class="t" style="transform:scaleX(0.9444);left:799.25px;top:86px;font-weight:bold;font-size:12px">Akce</div>
<div class="abs" id="asel"></div>
<div id="x44" class="t" style="transform:scaleX(0.9477);left:801.25px;top:110px;font-size:12px">Správa disků</div>
<div id="x45" class="t" style="transform:scaleX(0.9246);left:825.0px;top:134px;font-size:12px">Další akce</div>


<!-- DIALOG -->
<div class="abs" id="dlg"></div>
<div class="abs" id="dlghead"></div>
<div id="x46" class="t" style="transform:scaleX(0.9596);left:225.25px;top:107px;font-size:12px">Nový svazek typu RAID-5</div>
<svg style="left:694px;top:107.5px" width="10.5" height="10.5" viewBox="0 0 10.5 10.5"><path d="M0.3 0.3 L10.2 10.2 M10.2 0.3 L0.3 10.2" stroke="#000" stroke-width="1.05" fill="none"/></svg>
<div id="x47" class="t d" style="transform:scaleX(1.0091);left:239.25px;top:139px;font-weight:bold">Vyberte jednotky</div>
<div id="x48" class="t d" style="transform:scaleX(0.9214);left:261.5px;top:154px">Můžete vybrat disky a nastavit velikost disku pro tento svazek.</div>
<div class="abs" style="left:217px;top:187px;width:497px;height:1px;background:#a0a0a0"></div>
<div id="x49" class="t d" style="transform:scaleX(0.9367);left:261.0px;top:200px">Vyberte disky, které chcete použít, a klikněte na tlačítko Přidat.</div>
<div id="x50" class="t d" style="transform:scaleX(0.8867);left:261.0px;top:242px">K dispozici:</div>
<div class="lb" style="left:260px;top:260px;width:144px;height:96px"></div>
<div id="x51" class="t d" style="transform:scaleX(0.9256);left:262.25px;top:262px">Disk 2</div>
<div id="x52" class="t d" style="transform:scaleX(0.919);left:313.25px;top:262px">5117 MB</div>
<div id="x53" class="t d" style="transform:scaleX(0.9256);left:262.25px;top:278px">Disk 3</div>
<div id="x54" class="t d" style="transform:scaleX(0.919);left:313.25px;top:278px">5117 MB</div>
<div class="btn dis" style="left:418px;top:266px;width:93px"></div>
<div id="b0" class="t d" style="transform:scaleX(0.9085);left:446.25px;top:270px;color:#838383">Přidat &gt;</div>
<div class="btn" style="left:418px;top:295px;width:93px"></div>
<div id="b1" class="t d" style="transform:scaleX(0.8697);left:439.25px;top:299px">&lt; Odebrat</div>
<div class="btn" style="left:418px;top:324px;width:93px"></div>
<div id="b2" class="t d" style="transform:scaleX(0.9051);left:431.5px;top:328px">&lt; Odebrat vše</div>
<div id="x55" class="t d" style="transform:scaleX(0.9158);left:528.0px;top:242px">Vybrané:</div>
<div class="lb" style="left:528px;top:260px;width:144px;height:96px"></div>
<div class="abs" style="left:530px;top:262px;width:140px;height:15px;background:#0078d7"></div>
<div id="x56" class="t d" style="transform:scaleX(0.9036);left:530.75px;top:262px;color:#fff">Disk 1</div>
<div id="x57" class="t d" style="transform:scaleX(0.9147);left:581.25px;top:262px;color:#fff">5117 MB</div>
<div id="x58" class="t d" style="transform:scaleX(0.9229);left:258.0px;top:372px">Celková velikost svazku (MB):</div>
<div id="x59" class="t d" style="transform:scaleX(0.9047);left:258.0px;top:396px">Maximální místo k dispozici (MB):</div>
<div id="x60" class="t d" style="transform:scaleX(0.9212);left:258.0px;top:419px">Zvolte velikost místa (MB):</div>
<div class="sunk" style="left:528px;top:372px;width:144px"></div>
<div id="x61" class="t d" style="transform:scaleX(1.0);left:529.25px;top:373px">0</div>
<div class="sunk" style="left:528px;top:395px;width:144px"></div>
<div id="x62" class="t d" style="transform:scaleX(0.9599);left:529.25px;top:396px">5117</div>
<div class="abs" style="left:528px;top:416px;width:144px;height:23px;background:#fff;border:1px solid #7a7a7a"></div>
<div id="x63" class="t d" style="transform:scaleX(0.9599);left:531.25px;top:419px">5117</div>
<div class="abs" style="left:655px;top:418px;width:15px;height:9px;background:#e1e1e1;border:1px solid #adadad"></div>
<div class="abs" style="left:655px;top:428px;width:15px;height:9px;background:#e1e1e1;border:1px solid #adadad"></div>
<svg style="left:660px;top:421px" width="5" height="3" viewBox="0 0 5 3"><path d="M0 3 L2.5 0 L5 3 Z" fill="#000"/></svg>
<svg style="left:660px;top:431px" width="5" height="3" viewBox="0 0 5 3"><path d="M0 0 L2.5 3 L5 0 Z" fill="#000"/></svg>
<div class="abs" style="left:217px;top:459px;width:497px;height:1px;background:#a0a0a0"></div>
<div class="btn" style="left:470px;top:474px;width:73px;border:2px solid #0078d7"></div>
<div id="b3" class="t d" style="transform:scaleX(0.8802);left:491.0px;top:478px">&lt; Zpět</div>
<div class="btn dis" style="left:545px;top:474px;width:73px"></div>
<div id="b4" class="t d" style="transform:scaleX(0.9281);left:564.25px;top:478px;color:#838383">Další &gt;</div>
<div class="btn" style="left:630px;top:474px;width:73px"></div>
<div id="b5" class="t d" style="transform:scaleX(0.85);left:652.75px;top:478px">Zrušit</div>


<svg style="left:963.6px;top:113.3px" width="10" height="6" viewBox="0 0 10 6"><path d="M0 6 L5 0.5 L10 6 Z" fill="#000"/></svg>
<svg style="left:966px;top:136px" width="5" height="10" viewBox="0 0 5 10"><path d="M0 0 L5 5 L0 10 Z" fill="#000"/></svg>
<div class="abs" style="left:794px;top:679px;width:185px;height:1px;background:#d4d4d4"></div>
<!-- STATUS -->
<div class="abs" id="status"></div>

<div class="abs" style="left:0;top:680px;width:979px;height:1px;background:#fff"></div>
<div class="abs" style="left:761px;top:683px;width:1px;height:15px;background:#dadada"></div>
<div class="abs" style="left:894px;top:683px;width:1px;height:15px;background:#dadada"></div>

<svg style="left:0;top:0" width="979" height="40" viewBox="0 0 979 40"><path d="M396.5 8.6 L396.5 24.6 L400.4 21 L403 27 L405.7 25.8 L403.2 20 L408.2 20 Z" fill="#fff" stroke="#111" stroke-width="1.1" stroke-linejoin="miter"/></svg>
</body>
</html>
